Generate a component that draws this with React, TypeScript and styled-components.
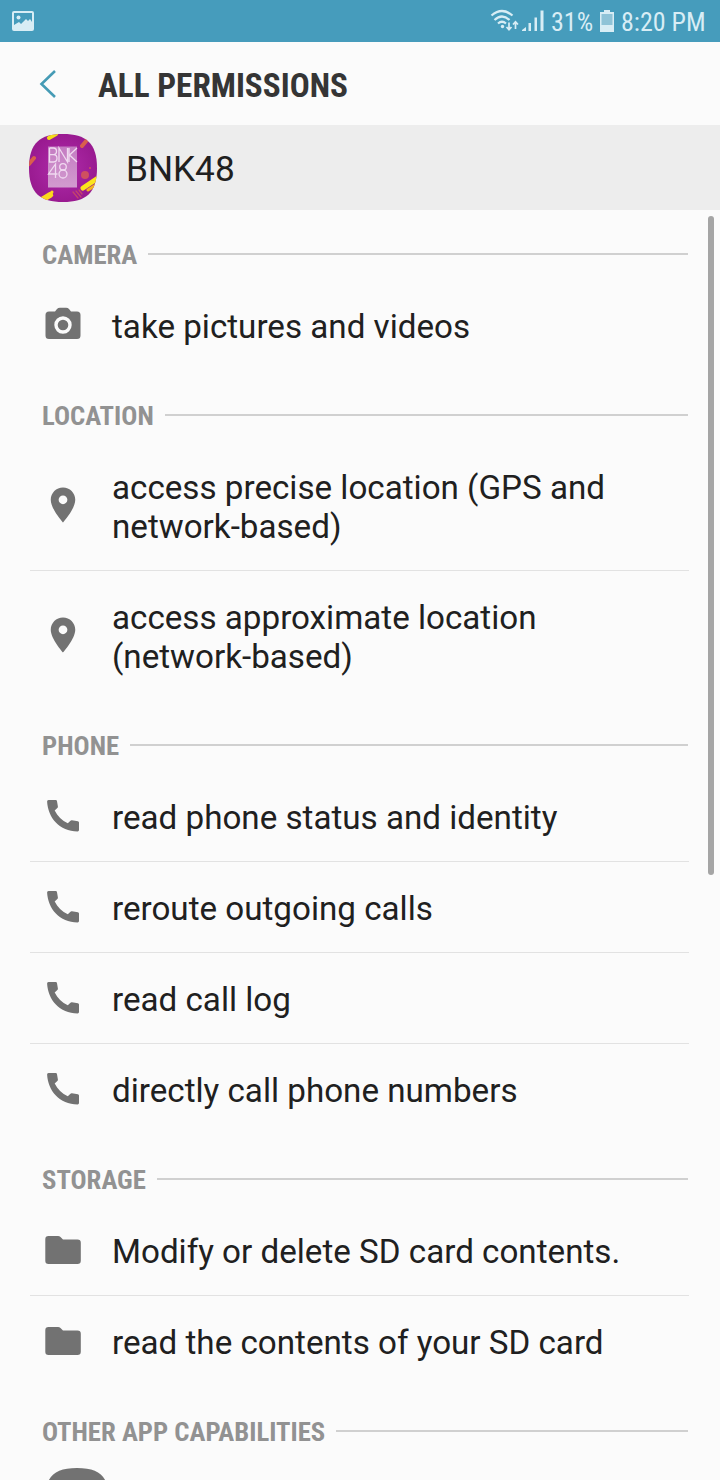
import React from "react";
import styled, { createGlobalStyle } from "styled-components";

const Global = createGlobalStyle`
  * { box-sizing: border-box; }
  body { margin: 0; background: #fbfbfb; font-family: Roboto, "Liberation Sans", sans-serif; }
`;

const Screen = styled.main`
  position: relative;
  width: 720px;
  height: 1480px;
  overflow: hidden;
  display: flex;
  flex-direction: column;
  background: #fbfbfb;
  color: #202020;
`;

const StatusBar = styled.div`
  flex: none;
  height: 42px;
  display: flex;
  align-items: center;
  padding: 0 15px 0 12px;
  background: #469cbc;
  color: #d8edf5;
`;

const StatusGroup = styled.div`
  margin-left: auto;
  display: flex;
  align-items: center;
`;

const StatusText = styled.span<{ $gap: number; $width: number }>`
  font: 400 26px/42px "Roboto Condensed", Roboto, sans-serif;
  font-stretch: 75%;
  margin-left: ${(p) => p.$gap}px;
  width: ${(p) => p.$width}px;
  white-space: nowrap;
  padding-top: 2px;
`;

const BatteryIcon = styled.svg`
  margin-left: 7px;
`;

const TitleBar = styled.header`
  flex: none;
  height: 83px;
  display: flex;
  align-items: center;
  padding: 1px 0 0 39px;
`;

const Title = styled.h1`
  margin: 4px 0 0 41px;
  font: 700 33.2px/40px "Roboto Condensed", Roboto, sans-serif;
  font-stretch: 75%;
  color: #353535;
  white-space: nowrap;
`;

const AppRow = styled.div`
  flex: none;
  height: 85px;
  display: flex;
  align-items: center;
  padding-left: 28px;
  background: #ededed;
`;

const AppName = styled.span`
  margin-left: 28px;
  font-size: 35.2px;
  line-height: 42px;
  padding-top: 3px;
`;

const SectionHead = styled.h2`
  flex: none;
  height: 70px;
  margin: 0;
  padding: 19px 32px 0 42px;
  display: flex;
  align-items: flex-start;
  font: 700 26.7px/52px "Roboto Condensed", Roboto, sans-serif;
  font-stretch: 75%;
  color: #929292;
  white-space: nowrap;
`;

const Rule = styled.span`
  flex: 1;
  height: 2px;
  margin: 24px 0 0 11px;
  background: #d0d0d0;
`;

const Item = styled.div<{ $tall?: boolean; $divided?: boolean }>`
  flex: none;
  height: ${(p) => (p.$tall ? 130 : 91)}px;
  margin: 0 31px 0 30px;
  padding-left: 12px;
  display: flex;
  align-items: center;
  border-bottom: 1px solid ${(p) => (p.$divided ? "#e2e2e2" : "transparent")};
`;

const IconSlot = styled.span<{ $raised?: boolean }>`
  flex: none;
  width: 42px;
  height: 42px;
  margin-right: 28px;
  margin-bottom: ${(p) => (p.$raised ? 2 : 0)}px;
  color: #727272;
  svg { display: block; }
`;

const Label = styled.span`
  font-size: 33.18px;
  line-height: 39px;
  white-space: pre-line;
  padding-top: 2px;
`;

const NextItem = styled.div`
  flex: none;
  padding: 11px 0 0 45px;
`;

const ScrollThumb = styled.div`
  position: absolute;
  top: 216px;
  right: 6px;
  width: 6px;
  height: 659px;
  border-radius: 3px;
  background: #a5a5a5;
`;

type Kind = "camera" | "location" | "phone" | "folder";

function KindIcon({ kind }: { kind: Kind }) {
  if (kind === "camera")
    return (
      <svg width="42" height="42" viewBox="0 0 42 42">
        <path fill="currentColor" d="M7 7.500h6l2-2.600q1-1.200 3-1.200h6q2 0 3 1.200l2 2.600h6q3.500 0 3.500 3.500v20.500q0 3.500-3.500 3.500H7q-3.500 0-3.500-3.500V11Q3.500 7.500 7 7.500z" />
        <circle cx="21" cy="21" r="7" fill="none" stroke="#fbfbfb" strokeWidth="3.400" />
      </svg>
    );
  if (kind === "phone")
    return (
      <svg width="42" height="42" viewBox="0 0 42 42">
        <path fill="currentColor" d="M6.500 5h7.200q1.200 0 1.300 1.200l.9 5.300q.1 1-.6 1.600L12.700 15.600C15.500 21.200 20 25.700 25.800 28.300l2.400-2.400q.7-.7 1.700-.6l6 .9q1.100.2 1.100 1.200v7.700q0 1.300-1.400 1.300C17.500 36.200 6 23 5.100 6.500Q5 5 6.500 5z" />
      </svg>
    );
  if (kind === "folder")
    return (
      <svg width="42" height="42" viewBox="0 0 42 42">
        <path fill="currentColor" d="M6.500 7h9.500q1.500 0 2.500 1l2.500 2.500h14.500q3.300 0 3.300 3.300v17.900q0 3.300-3.300 3.300h-29q-3.200 0-3.200-3.300V10.200Q3.300 7 6.500 7z" />
      </svg>
    );
  return (
    <svg width="42" height="42" viewBox="0 0 24 24">
      <path
        fill="currentColor"
        d="M12 2C8.130 2 5 5.130 5 9c0 5.250 7 13 7 13s7-7.750 7-13c0-3.870-3.130-7-7-7zm0 9.500a2.500 2.500 0 0 1 0-5 2.500 2.500 0 0 1 0 5z"
      />
    </svg>
  );
}

const sections: { title: string; kind: Kind; items: string[] }[] = [
  { title: "CAMERA", kind: "camera", items: ["take pictures and videos"] },
  {
    title: "LOCATION",
    kind: "location",
    items: ["access precise location (GPS and\nnetwork-based)", "access approximate location\n(network-based)"],
  },
  {
    title: "PHONE",
    kind: "phone",
    items: ["read phone status and identity", "reroute outgoing calls", "read call log", "directly call phone numbers"],
  },
  { title: "STORAGE", kind: "folder", items: ["Modify or delete SD card contents.", "read the contents of your SD card"] },
];

function AppLogo() {
  return (
    <svg width="70" height="70" viewBox="0 0 70 70">
      <defs>
        <clipPath id="squircle">
          <path d="M35 1C58 1 69 10 69 35S58 69 35 69 1 60 1 35 12 1 35 1z" />
        </clipPath>
        <radialGradient id="purple">
          <stop offset="0" stopColor="#b02cab" />
          <stop offset="1" stopColor="#991a90" />
        </radialGradient>
        <linearGradient id="plate" x2="0" y2="1">
          <stop offset="0" stopColor="#c47bc2" />
          <stop offset="1" stopColor="#d29bcf" />
        </linearGradient>
      </defs>
      <g clipPath="url(#squircle)">
        <rect width="70" height="70" fill="url(#purple)" />
        <g strokeLinecap="round" fill="none">
          <path d="M21 5l7-4" stroke="#f5dc18" strokeWidth="4" />
          <path d="M1 31l5-6M54 13l5-6" stroke="#d9604c" strokeWidth="4" />
          <path d="M55 55l15-10" stroke="#fbe51c" strokeWidth="5" />
          <path d="M60 57l8-5" stroke="#f4b51c" strokeWidth="3" />
          <path d="M12 68l10-6" stroke="#fbd91c" strokeWidth="6" />
          <path d="M22 62l2-3" stroke="#fbd91c" strokeWidth="3" />
          <path d="M45 59l5 6M48 58l5 6M51 57l3 4" stroke="#c4456b" strokeWidth="1.300" />
        </g>
        <circle cx="57" cy="42" r="4" fill="#cf5060" />
        <circle cx="62" cy="35" r="1" fill="#cf5060" />
        <rect x="20" y="13.500" width="29" height="41" fill="url(#plate)" />
        <g fill="none" stroke="#f0d9f0" strokeWidth="1.300">
          <path d="M21.500 15v14h4q3.500 0 3.500-3.700t-3.500-3.700h-4m0-6.600h4q3 0 3 3.300t-3 3.300M31 29V15l8.500 14V15M41 15v14M49 15l-7.500 7 7.500 7M27.500 45V31l-7 10h9" />
          <ellipse cx="35" cy="33.800" rx="3.300" ry="3.200" />
          <ellipse cx="35" cy="41" rx="4" ry="4" />
        </g>
      </g>
    </svg>
  );
}

export default function App() {
  return (
    <Screen>
      <Global />
      <StatusBar>
        <svg width="22" height="20" viewBox="0 0 22 20">
          <rect x="1" y="1" width="20" height="18" rx="1" fill="none" stroke="currentColor" strokeWidth="2" />
          <circle cx="6.500" cy="6.500" r="2" fill="currentColor" />
          <path d="M2 14l5-3 2 2 5-5 2 2 2-2 2 3v7H2z" fill="currentColor" />
        </svg>
        <StatusGroup>
          <svg width="56" height="24" viewBox="0 0 56 24">
            <g fill="none" stroke="currentColor" strokeWidth="2.200">
              <path d="M1.500 6.500Q12 -2.500 22.500 6.500M4.500 11Q12 4 19.500 11M8 14.500Q12 11 16 14.500" />
              <path d="M19 13.500v7M16.500 18l2.500 2.700 2.500-2.700M25.500 20v-7M23 15.500l2.500-2.700 2.500 2.700" strokeWidth="1.700" />
            </g>
            <circle cx="12.500" cy="17.500" r="1.700" fill="currentColor" />
            <path d="M32 22v-1l4-3v4zM38.500 14H41v8h-2.500zM44.500 8.500H47V22h-2.500zM50.500 1.500H53.500V22h-3z" fill="currentColor" />
          </svg>
          <StatusText $gap={5} $width={42}>31%</StatusText>
          <BatteryIcon width="14" height="22" viewBox="0 0 14 22">
            <path d="M4 0h6v2H14v20H0V2h4z" fill="currentColor" />
            <path d="M1.500 4h11v11h-11z" fill="#8fc3d7" />
          </BatteryIcon>
          <StatusText $gap={7} $width={84}>8:20 PM</StatusText>
        </StatusGroup>
      </StatusBar>
      <TitleBar>
        <svg width="18" height="30" viewBox="0 0 18 30">
          <path d="M16 2L2.500 15L16 28" fill="none" stroke="#459bb5" strokeWidth="2.600" />
        </svg>
        <Title>ALL PERMISSIONS</Title>
      </TitleBar>
      <AppRow>
        <AppLogo />
        <AppName>BNK48</AppName>
      </AppRow>
      {sections.map((s) => (
        <React.Fragment key={s.title}>
          <SectionHead>
            {s.title}
            <Rule />
          </SectionHead>
          {s.items.map((label, i) => (
            <Item key={label} $tall={label.includes("\n")} $divided={i < s.items.length - 1}>
              <IconSlot $raised={s.kind === "location"}>
                <KindIcon kind={s.kind} />
              </IconSlot>
              <Label>{label}</Label>
            </Item>
          ))}
        </React.Fragment>
      ))}
      <SectionHead>
        OTHER APP CAPABILITIES
        <Rule />
      </SectionHead>
      <NextItem>
        <svg width="64" height="64" viewBox="0 0 64 64">
          <path d="M32 0C55 0 64 9 64 32S55 64 32 64 0 55 0 32 9 0 32 0z" fill="#727272" />
        </svg>
      </NextItem>
      <ScrollThumb />
    </Screen>
  );
}
